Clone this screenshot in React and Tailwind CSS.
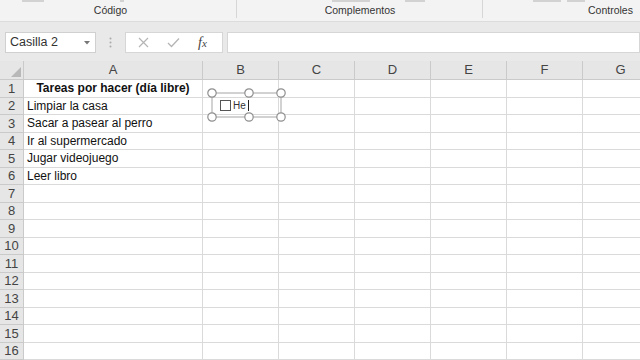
import React from 'react';

const cols = [
    { key: 'A', w: 'w-[179px]' },
    { key: 'B', w: 'w-[76px]' },
    { key: 'C', w: 'w-[76px]' },
    { key: 'D', w: 'w-[76px]' },
    { key: 'E', w: 'w-[76px]' },
    { key: 'F', w: 'w-[76px]' },
    { key: 'G', w: 'w-[76px]' },
];

const tasks = [
    { text: 'Tareas por hacer (día libre)', bold: true },
    { text: 'Limpiar la casa' },
    { text: 'Sacar a pasear al perro' },
    { text: 'Ir al supermercado' },
    { text: 'Jugar videojuego' },
    { text: 'Leer libro' },
];

const rows = Array.from({ length: 16 }, (_, i) => i + 1);

const App = () => {
    return (
        <div className="w-[640px] h-[360px] overflow-hidden bg-white font-['Liberation_Sans',Arial,sans-serif] text-[#222] relative">
            {/* Ribbon bottom (group labels) */}
            <div className="h-[22px] bg-[#f3f3f3] border-b border-[#dcdcdc] flex text-[10.5px] text-[#333]">
                <div className="w-[237px] relative flex items-end justify-center pb-[2px] pr-[16px]">
                    {/* cut-off button labels of the row above */}
                    <div className="absolute top-0 left-[22px] w-[22px] h-[2px] bg-[#d2d2d2]" />
                    <div className="absolute top-0 left-[120px] w-[4px] h-[2px] bg-[#d2d2d2]" />
                    <span>Código</span>
                    <div className="absolute right-0 top-0 h-[18px] border-r border-[#d6d6d6]" />
                </div>
                <div className="w-[246px] relative flex items-end justify-center pb-[2px]">
                    <div className="absolute top-0 left-[95px] w-[38px] h-[2px] bg-[#d2d2d2]" />
                    <div className="absolute top-0 left-[168px] w-[20px] h-[2px] bg-[#d2d2d2]" />
                    <span>Complementos</span>
                    <div className="absolute right-0 top-0 h-[18px] border-r border-[#d6d6d6]" />
                </div>
                <div className="flex-1 relative flex items-end pb-[2px] pl-[105px]">
                    <div className="absolute top-0 left-[50px] w-[28px] h-[2px] bg-[#d2d2d2]" />
                    <div className="absolute top-0 left-[84px] w-[18px] h-[2px] bg-[#d2d2d2]" />
                    <span>Controles</span>
                </div>
            </div>

            {/* Formula bar */}
            <div className="h-[39px] bg-[#e9e9e9] flex items-start pt-[10px]">
                <div className="ml-[5px] w-[91px] shrink-0 h-[21px] bg-white border border-[#d0d0d0] flex items-center justify-between pl-[4px] pr-[5px]">
                    <span className="text-[12.5px] text-[#333]">Casilla 2</span>
                    <svg width="6" height="4" viewBox="0 0 6 4"><path d="M0 0 L6 0 L3 3.5 Z" fill="#777" /></svg>
                </div>
                <div className="w-[29px] shrink-0 h-[21px] flex items-center justify-center">
                    <svg width="3" height="11" viewBox="0 0 3 11">
                        <circle cx="1.5" cy="1.5" r="1" fill="#aaa" />
                        <circle cx="1.5" cy="5.5" r="1" fill="#aaa" />
                        <circle cx="1.5" cy="9.5" r="1" fill="#aaa" />
                    </svg>
                </div>
                <div className="w-[98px] shrink-0 h-[21px] bg-white border border-[#d6d6d6] flex items-center pl-[12px] gap-[18px]">
                    <svg width="11" height="11" viewBox="0 0 11 11"><path d="M1 1 L10 10 M10 1 L1 10" stroke="#b5b5b5" strokeWidth="1.2" fill="none" /></svg>
                    <svg width="13" height="11" viewBox="0 0 13 11"><path d="M1 6 L4.5 9.5 L12 1.5" stroke="#b5b5b5" strokeWidth="1.3" fill="none" /></svg>
                    <span className="font-['Liberation_Serif',serif] italic text-[14px] text-[#444] leading-none">f<span className="text-[11px]">x</span></span>
                </div>
                <div className="ml-[4px] flex-1 h-[21px] bg-white border border-[#d6d6d6]" />
            </div>

            {/* Column headers */}
            <div className="flex h-[19px] bg-[#e6e6e6]">
                <div className="w-[24px] shrink-0 h-full border-r border-b border-[#cacaca] relative">
                    <svg className="absolute right-[2px] bottom-[2px]" width="10" height="10" viewBox="0 0 10 10"><path d="M10 0 L10 10 L0 10 Z" fill="#b8b8b8" /></svg>
                </div>
                {cols.map((c) => (
                    <div key={c.key} className={`${c.w} shrink-0 h-full border-r border-b border-[#cacaca] flex items-center justify-center text-[13px] text-[#444]`}>
                        {c.key}
                    </div>
                ))}
            </div>

            {/* Rows */}
            {rows.map((r) => {
                const task = tasks[r - 1];
                return (
                    <div key={r} className="flex h-[17.5px]">
                        <div className="w-[24px] shrink-0 h-full bg-[#e6e6e6] border-r border-b border-[#cacaca] flex items-center justify-center text-[13px] text-[#444]">
                            {r}
                        </div>
                        {cols.map((c) => (
                            <div key={c.key} className={`${c.w} shrink-0 h-full border-r border-b border-[#dadada] flex items-center text-[12px] text-[#111] overflow-hidden whitespace-nowrap`}>
                                {c.key === 'A' && task && (
                                    task.bold
                                        ? <span className="w-full text-center font-bold">{task.text}</span>
                                        : <span className="pl-[3px]">{task.text}</span>
                                )}
                            </div>
                        ))}
                    </div>
                );
            })}

            {/* Checkbox form control being edited */}
            <div className="absolute left-[207px] top-[88px] w-[80px] h-[34px]">
                <svg className="absolute inset-0" width="80" height="34" viewBox="0 0 80 34">
                    <path d="M5 5 L74 5 L74 29 L5 29 Z" stroke="#a5a5a5" strokeWidth="1" fill="none" />
                    {[[5, 5], [42, 5], [74, 5], [5, 29], [42, 29], [74, 29]].map(([x, y], i) => (
                        <circle key={i} cx={x} cy={y} r="4.2" fill="white" stroke="#8f8f8f" strokeWidth="1.2" />
                    ))}
                </svg>
                <div className="absolute left-[13px] top-[12px] flex items-center gap-[2px]">
                    <div className="w-[11px] h-[11px] border border-[#555] bg-white" />
                    <span className="text-[10px] text-[#333] leading-none">He</span>
                    <span className="w-px h-[11px] bg-[#222]" />
                </div>
            </div>
        </div>
    );
};

export default App;
